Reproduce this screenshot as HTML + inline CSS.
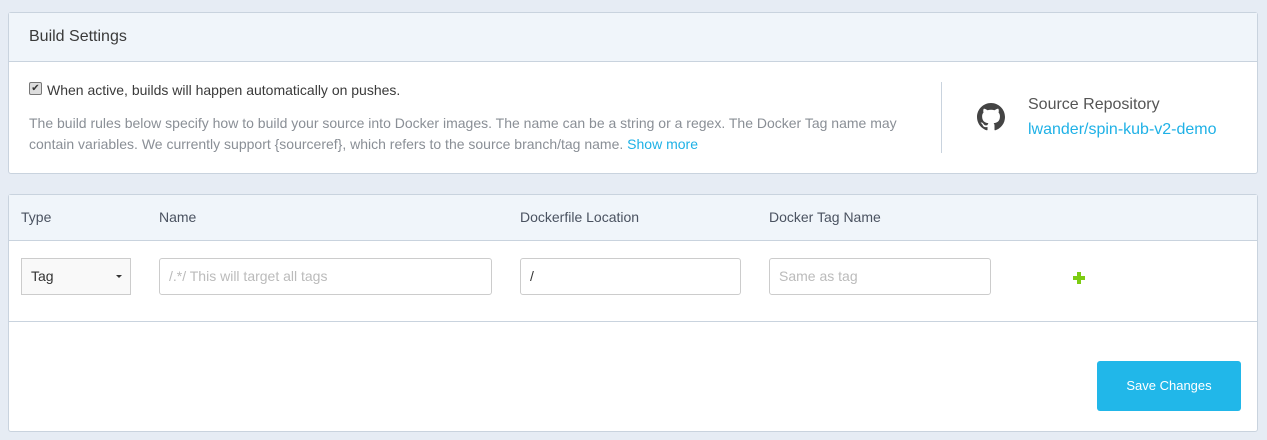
<!DOCTYPE html>
<html><head><style>
body{margin:0;background:#e6ecf4;font-family:"Liberation Sans",sans-serif;width:1267px;height:440px;position:relative;overflow:hidden}
.p{position:absolute;left:8px;width:1248px;background:#fff;border:1px solid #c9d3de;border-radius:3px}
.h{background:#f0f5fa;border-bottom:1px solid #c9d3de;position:relative}
.a{position:absolute}
.inp{position:absolute;height:37px;border:1px solid #ccc;border-radius:3px;box-sizing:border-box;font-size:14px;line-height:35px;padding-left:9px;color:#bbb;background:#fff}
</style></head><body>
<div class="p" style="top:12px;height:160px">
  <div class="h" style="height:48px"><div class="a" style="left:20px;top:15px;font-size:16px;color:#3a3a3a">Build Settings</div></div>
  <div class="a" style="left:20px;top:69px;width:11px;height:11px;border:1px solid #777;border-radius:2px;background:#ddd;font-size:10px;line-height:11px;text-align:center;color:#333">✔</div>
  <div class="a" style="left:38px;top:69px;font-size:14px;color:#3a3a3a">When active, builds will happen automatically on pushes.</div>
  <div class="a" style="left:20px;top:100px;width:900px;font-size:14px;line-height:21px;color:#8a8f96">The build rules below specify how to build your source into Docker images. The name can be a string or a regex. The Docker Tag name may contain variables. We currently support {sourceref}, which refers to the source branch/tag name. <span style="color:#1fb1e6">Show more</span></div>
  <div class="a" style="left:932px;top:69px;width:1px;height:71px;background:#c9d3de"></div>
  <svg class="a" style="left:968px;top:90px" width="28" height="28" viewBox="0 0 16 16"><path fill="#444" d="M8 0C3.580 0 0 3.58 0 8c0 3.54 2.29 6.53 5.47 7.59.4.07.55-.17.55-.38 0-.19-.01-.82-.01-1.49-2.010.37-2.53-.49-2.69-.94-.09-.23-.48-.94-.82-1.13-.28-.15-.68-.52-.01-.53.63-.01 1.08.58 1.23.82.72 1.21 1.87.87 2.33.66.07-.52.28-.87.51-1.07-1.78-.2-3.64-.89-3.64-3.95 0-.87.31-1.59.82-2.15-.08-.2-.36-1.02.08-2.12 0 0 .67-.21 2.2.82.64-.18 1.32-.27 2-.27.68 0 1.36.09 2 .27 1.53-1.04 2.2-.82 2.2-.82.44 1.1.16 1.92.08 2.12.51.56.82 1.27.82 2.15 0 3.07-1.87 3.750-3.65 3.95.29.25.54.73.54 1.48 0 1.07-.01 1.93-.01 2.2 0 .21.15.46.55.38A8.013 8.013 0 0016 8c0-4.42-3.58-8-8-8z"/></svg>
  <div class="a" style="left:1019px;top:83px;font-size:16px;color:#555">Source Repository</div>
  <div class="a" style="left:1019px;top:108px;font-size:16px;color:#1fb1e6">lwander/spin-kub-v2-demo</div>
</div>
<div class="p" style="top:194px;height:236px">
  <div class="h" style="height:45px;font-size:14px;color:#4a5260">
    <div class="a" style="left:12px;top:14px">Type</div>
    <div class="a" style="left:150px;top:14px">Name</div>
    <div class="a" style="left:511px;top:14px">Dockerfile Location</div>
    <div class="a" style="left:760px;top:14px">Docker Tag Name</div>
  </div>
  <div style="height:80px;border-bottom:1px solid #c9d3de;position:relative">
    <div class="inp" style="left:12px;top:17px;width:110px;background:#f9f9f9;color:#333;border-radius:0">Tag<span style="position:absolute;right:8px;top:16px;border-left:3px solid transparent;border-right:3px solid transparent;border-top:3px solid #333"></span></div>
    <div class="inp" style="left:150px;top:17px;width:333px">/.*/ This will target all tags</div>
    <div class="inp" style="left:511px;top:17px;width:221px;color:#333">/</div>
    <div class="inp" style="left:760px;top:17px;width:222px">Same as tag</div>
    <div class="a" style="left:1064px;top:35px;width:12px;height:4px;background:#7ccc12"></div>
    <div class="a" style="left:1068px;top:31px;width:4px;height:12px;background:#7ccc12"></div>
  </div>
  <div class="a" style="left:1088px;top:166px;width:144px;height:50px;background:#21b7e9;border-radius:3px;color:#fff;font-size:13px;text-align:center;line-height:50px">Save Changes</div>
</div>
</body></html>
